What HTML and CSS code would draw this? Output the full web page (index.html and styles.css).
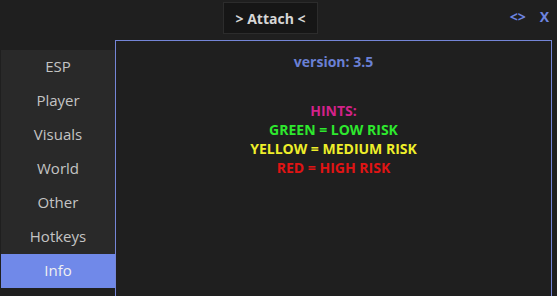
FILE: index.html
```html
<!DOCTYPE html>
<html lang="en">
<head>
    <meta charset="UTF-8">
    <meta name="viewport" content="width=device-width, initial-scale=1.0">
    <title>Menu</title>
    <link rel="stylesheet" href="styles.css">
</head>
<body>
    <div class="topbar">
        <div class="attach">&gt; Attach &lt;</div>
        <div class="window-btns">
            <span class="win-btn">&lt;&gt;</span>
            <span class="win-btn">X</span>
        </div>
    </div>
    <div class="main">
        <div class="sidebar">
            <div class="tab">ESP</div>
            <div class="tab">Player</div>
            <div class="tab">Visuals</div>
            <div class="tab">World</div>
            <div class="tab">Other</div>
            <div class="tab">Hotkeys</div>
            <div class="tab active">Info</div>
        </div>
        <div class="panel">
            <div class="version">version: 3.5</div>
            <div class="hints">
                <div class="hint-title">HINTS:</div>
                <div class="green">GREEN = LOW RISK</div>
                <div class="yellow">YELLOW = MEDIUM RISK</div>
                <div class="red">RED = HIGH RISK</div>
            </div>
        </div>
    </div>
</body>
</html>
```

FILE: styles.css
```css
html, body {
    margin: 0;
    height: 100%;
    overflow: hidden;
}
body {
    font-family: 'Open Sans', 'Noto Sans', sans-serif;
    background-color: #1f1f1f;
    color: #c8c8c8;
}
.topbar {
    height: 40px;
    display: flex;
    align-items: flex-start;
    padding-left: 223px;
    padding-right: 8px;
    box-sizing: border-box;
}
.attach {
    margin-top: 2px;
    width: 95px;
    height: 32px;
    box-sizing: border-box;
    border: 1px solid #2c2c2c;
    background-color: #161616;
    color: #d6d6d6;
    font-weight: bold;
    font-size: 14px;
    display: flex;
    align-items: center;
    justify-content: center;
}
.window-btns {
    margin-left: auto;
    display: flex;
    gap: 14px;
    margin-top: 7px;
}
.win-btn {
    color: #6d84e0;
    font-weight: bold;
    font-size: 14px;
}
.main {
    display: flex;
    align-items: flex-start;
}
.sidebar {
    margin-top: 10px;
    margin-left: 1px;
    width: 114px;
    background-color: #292929;
}
.tab {
    height: 34px;
    line-height: 32px;
    text-align: center;
    font-size: 15px;
    color: #c4c4c4;
}
.tab.active {
    background-color: #7089e9;
    color: #f0f0f0;
}
.panel {
    width: 437px;
    height: 257px;
    box-sizing: border-box;
    border: 1px solid #7485d6;
    text-align: center;
    font-weight: bold;
    font-size: 14px;
    line-height: 19px;
    padding-top: 11px;
}
.version {
    color: #6a80d4;
}
.hints {
    margin-top: 30px;
}
.hint-title {
    color: #d2228a;
}
.green {
    color: #2ee82e;
}
.yellow {
    color: #eeee2a;
}
.red {
    color: #e01414;
}
```
